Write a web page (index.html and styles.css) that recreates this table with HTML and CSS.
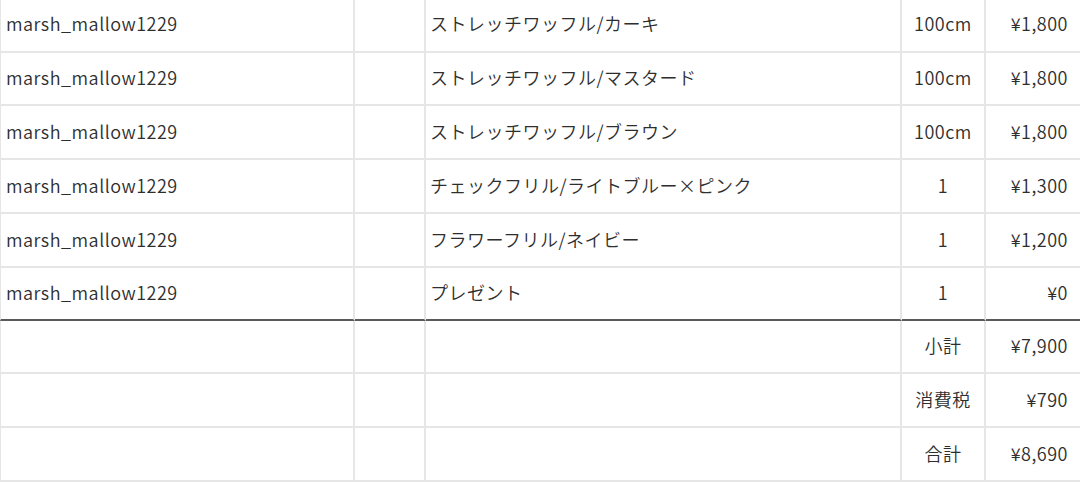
FILE: index.html
```html
<!DOCTYPE html>
<html lang="ja">
<head>
<meta charset="utf-8">
<link rel="stylesheet" href="styles.css">
</head>
<body>
<div class="sheet">
  <div class="cell c1">marsh_mallow1229</div><div class="cell c2"></div><div class="cell c3">ストレッチワッフル/カーキ</div><div class="cell c4">100cm</div><div class="cell c5">¥1,800</div>
  <div class="cell c1">marsh_mallow1229</div><div class="cell c2"></div><div class="cell c3">ストレッチワッフル/マスタード</div><div class="cell c4">100cm</div><div class="cell c5">¥1,800</div>
  <div class="cell c1">marsh_mallow1229</div><div class="cell c2"></div><div class="cell c3">ストレッチワッフル/ブラウン</div><div class="cell c4">100cm</div><div class="cell c5">¥1,800</div>
  <div class="cell c1">marsh_mallow1229</div><div class="cell c2"></div><div class="cell c3">チェックフリル/ライトブルー×ピンク</div><div class="cell c4">1</div><div class="cell c5">¥1,300</div>
  <div class="cell c1">marsh_mallow1229</div><div class="cell c2"></div><div class="cell c3">フラワーフリル/ネイビー</div><div class="cell c4">1</div><div class="cell c5">¥1,200</div>
  <div class="cell c1 last">marsh_mallow1229</div><div class="cell c2 last"></div><div class="cell c3 last">プレゼント</div><div class="cell c4 last">1</div><div class="cell c5 last">¥0</div>
  <div class="cell c1"></div><div class="cell c2"></div><div class="cell c3"></div><div class="cell c4">小計</div><div class="cell c5">¥7,900</div>
  <div class="cell c1"></div><div class="cell c2"></div><div class="cell c3"></div><div class="cell c4">消費税</div><div class="cell c5">¥790</div>
  <div class="cell c1"></div><div class="cell c2"></div><div class="cell c3"></div><div class="cell c4">合計</div><div class="cell c5">¥8,690</div>
</div>
</body>
</html>
```

FILE: styles.css
```css
html, body {
  margin: 0;
  padding: 0;
  background: #ffffff;
  overflow: hidden;
}

body {
  font-family: "Noto Sans CJK JP", "Noto Sans", sans-serif;
  font-size: 18px;
  font-weight: 350;
  color: #2e2e2e;
}

.sheet {
  margin-top: -2px;
  display: grid;
  grid-template-columns: 355px 71px 476px 84px 94px;
  grid-template-rows: 55px 53px 54px 54px 54px 53px 53px 54px 54px;
}

.cell {
  box-sizing: border-box;
  display: flex;
  align-items: center;
  padding-bottom: 3px;
  border-right: 2px solid #e6e6e6;
  border-bottom: 2px solid #e6e6e6;
  white-space: nowrap;
  overflow: hidden;
  letter-spacing: 0.5px;
}

.c1 {
  border-left: 1px solid #e6e6e6;
  padding-left: 5px;
}

.c3 {
  padding-left: 4px;
}

.c4 {
  justify-content: center;
}

.c5 {
  justify-content: flex-end;
  padding-right: 12px;
  border-right: none;
}

.last {
  border-bottom: 2px solid #5a5a5a;
}
```
